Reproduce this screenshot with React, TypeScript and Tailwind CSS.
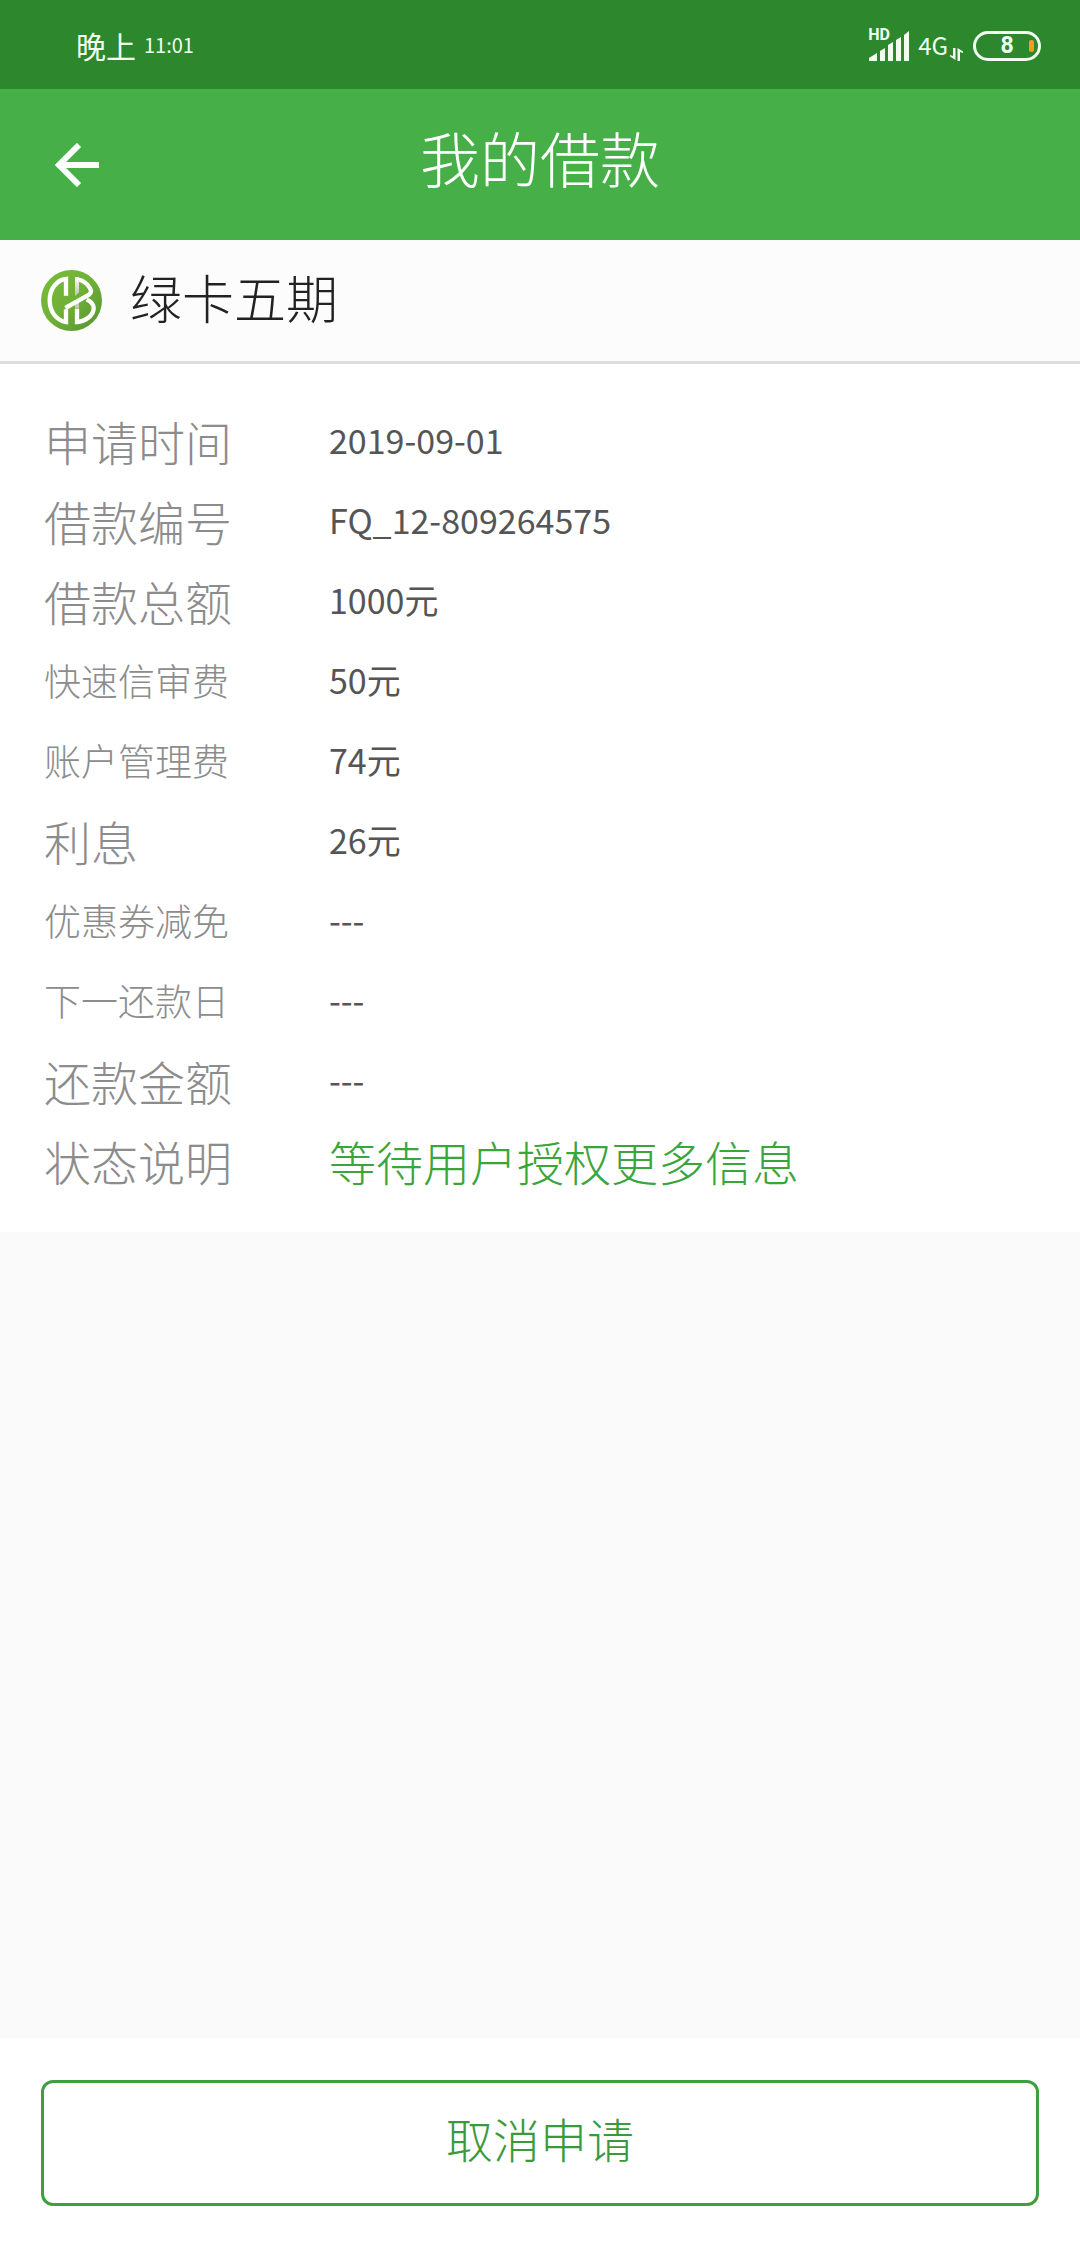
type Detail = {
  label: string
  value: string
  highlight?: boolean
}

const details: Detail[] = [
  { label: '申请时间', value: '2019-09-01' },
  { label: '借款编号', value: 'FQ_12-809264575' },
  { label: '借款总额', value: '1000元' },
  { label: '快速信审费', value: '50元' },
  { label: '账户管理费', value: '74元' },
  { label: '利息', value: '26元' },
  { label: '优惠券减免', value: '---' },
  { label: '下一还款日', value: '---' },
  { label: '还款金额', value: '---' },
  { label: '状态说明', value: '等待用户授权更多信息', highlight: true }
]

const SignalIcon = () => (
  <svg className="h-[30px] w-[42px]" viewBox="0 0 42 30" fill="currentColor">
    <path d="M1 30v-3l8-5v8z" />
    <path d="M12 30V20l5-3v13z" />
    <path d="M20 30V14l5-3v19z" />
    <path d="M28 30V9l5-3v24z" />
    <path d="M36 30V4l5-4v30z" />
  </svg>
)

const DataArrowsIcon = () => (
  <svg
    className="h-[14px] w-[13px]"
    viewBox="0 0 13 14"
    fill="currentColor"
  >
    <path d="M3 1h2.500v12L0 9.500V8l3 1z" />
    <path d="M7.500 14H10V5l3 1V4.500L7.500 1z" />
  </svg>
)

const BackIcon = () => (
  <svg
    className="h-11 w-11"
    viewBox="0 0 44 44"
    fill="none"
    stroke="currentColor"
    strokeWidth="6"
  >
    <path d="M24 2 4 22l20 20M4 22h40" />
  </svg>
)

const Logo = () => (
  <svg className="h-[61px] w-[61px] shrink-0" viewBox="0 0 183 183" fill="none">
    <defs>
      <linearGradient id="logo-bg" x1="0" y1="0" x2="1" y2="1">
        <stop offset="0" stopColor="#78bd3c" />
        <stop offset="0.500" stopColor="#6fb036" />
        <stop offset="1" stopColor="#559331" />
      </linearGradient>
      <linearGradient id="logo-fold" x1="0" y1="0" x2="0" y2="1">
        <stop offset="0" stopColor="#ffffff" />
        <stop offset="1" stopColor="#b9c4b2" />
      </linearGradient>
    </defs>
    <circle cx="91.500" cy="91.500" r="91.500" fill="url(#logo-bg)" />
    <path d="m102 100 12-7v22h-12z" fill="#c3cdbc" />
    <g stroke="#ffffff" strokeWidth="13">
      <path d="M75 77V27C46 30 26 58 26 91s20 61 49 65v-38" />
      <path d="M108 116v40c26-2 50-20 50-42 0-13-9-20-21-26" />
      <path d="m73 114 71-40c8-5 7-14 2-21-8-13-23-23-38-25" />
    </g>
    <path d="M102 21h12v46l-12 12z" fill="url(#logo-fold)" />
  </svg>
)

const StatusBar = () => (
  <div className="flex h-[89px] items-center justify-between bg-[#2d872d] pr-[39px] pl-[76px] font-normal text-[#f0fff0]">
    <div className="flex items-center gap-2">
      <span className="text-[30px] leading-8">晚上</span>
      <span className="text-[20px] leading-8">11:01</span>
    </div>
    <div className="flex h-8 items-end">
      <div className="relative mr-2">
        <SignalIcon />
        <span className="absolute -top-1 left-0 font-['Roboto',sans-serif] text-[16px] leading-4 font-bold">
          HD
        </span>
      </div>
      <span className="text-[24px] leading-8">4G</span>
      <span className="mr-2.5 ml-0.5">
        <DataArrowsIcon />
      </span>
      <div className="relative flex h-[30px] w-[68px] items-center justify-center rounded-full border-3 border-current">
        <span className="font-['Roboto',sans-serif] text-[23px] leading-6 font-bold">
          8
        </span>
        <span className="absolute right-1 h-3 w-[5px] rounded-xs bg-[#f79b1e]" />
      </div>
    </div>
  </div>
)

const DetailRow = ({ label, value, highlight }: Detail) => (
  <div className="flex h-20 items-center">
    <dt
      className={`w-[285px] shrink-0 text-[#8c8c8c] ${
        label.length > 4 ? 'text-[37px]' : 'text-[47px]'
      }`}
    >
      {label}
    </dt>
    <dd
      className={
        highlight
          ? 'text-[47px] text-[#3aa53a]'
          : 'text-[34px] font-normal text-[#555555]'
      }
    >
      {value}
    </dd>
  </div>
)

const App = () => {
  return (
    <div className="flex min-h-screen flex-col bg-[#fafafa] font-['Noto_Sans_CJK_SC',sans-serif] leading-none font-light">
      <StatusBar />
      <header className="relative flex h-[151px] items-center justify-center bg-[#46af48] text-white">
        <button
          type="button"
          aria-label="返回"
          className="absolute left-[55px] cursor-pointer"
        >
          <BackIcon />
        </button>
        <h1 className="pb-4 text-[60px] leading-16">我的借款</h1>
      </header>

      <main className="flex flex-1 flex-col">
        <section className="bg-white">
          <div className="flex h-[124px] items-center gap-7 border-b-3 border-[#dddddd] bg-[#fcfcfc] px-[41px]">
            <Logo />
            <h2 className="pb-2 text-[52px] leading-16 text-[#222222]">
              绿卡五期
            </h2>
          </div>
          <dl className="px-11 pt-9 pb-8">
            {details.map(detail => (
              <DetailRow key={detail.label} {...detail} />
            ))}
          </dl>
        </section>
      </main>

      <footer className="bg-white px-[41px] py-[42px]">
        <button
          type="button"
          className="h-[126px] w-full cursor-pointer rounded-xl border-3 border-[#3f9f40] pb-3 text-[47px] text-[#3a9a3b]"
        >
          取消申请
        </button>
      </footer>
    </div>
  )
}

export default App
